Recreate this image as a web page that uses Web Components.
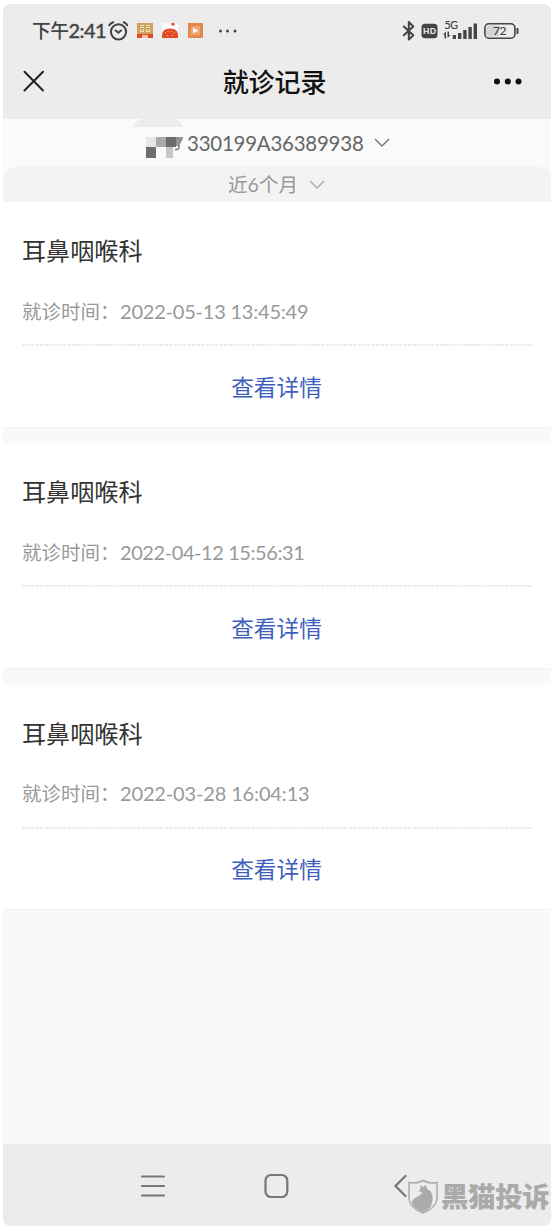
<!DOCTYPE html>
<html lang="zh-CN">
<head>
<meta charset="utf-8">
<title>就诊记录</title>
<style>
html,body{margin:0;background:#fff}
body{width:556px;height:1228px;overflow:hidden;font-family:Lato,"Noto Sans CJK SC",sans-serif}
</style>
</head>
<body>
<visit-app></visit-app>
<script>
const define = (name, html) => customElements.define(name, class extends HTMLElement {
  constructor() {
    super();
    const t = document.createElement('template');
    t.innerHTML = html;
    this.attachShadow({mode: 'open'}).append(t.content.cloneNode(true));
  }
});

define('status-bar', `
<style>
:host{display:flex;height:54px;box-sizing:border-box;padding:0 32px 0 29px;align-items:center;color:#444}
svg{display:block;flex:none}
.time{font:500 18.800px/30px Lato,"Noto Sans CJK SC",sans-serif;width:76px;white-space:nowrap;letter-spacing:-.5px;position:relative;top:-1px}
.time b{font:500 20px/30px Lato,sans-serif;letter-spacing:-.6px;-webkit-text-stroke:.3px #444}
.space{flex:1}
</style>
<span class="time">下午<b>2:41</b></span>
<svg width="20" height="20" viewBox="0 0 20 20" fill="none" stroke="#444" stroke-width="2" stroke-linecap="round"><circle cx="10.500" cy="10.800" r="7.600"/><path d="M1.300 4.300Q2.600 2 5.300 1.200M15.700 1.200Q18.200 2 19.300 4.300M7.600 9.500l2.700 2.300 2.700-2.300"/></svg>
<svg style="margin-left:9px" width="16" height="16" viewBox="0 0 16 16"><path fill="#cda35e" d="M0 0h16v12H0z"/><path fill="#f3e2b4" d="M3 2h4v1H3zM9 2h4v1H9zM3 4h4v1H3zM9 4h4v1H9zM3 6h1v3H3zM6 6h1v3H6zM9 6h1v3H9zM12 6h1v3h-1zM4 8h2v1H4zM10 8h2v1h-2z"/><path fill="#df4c2b" d="M0 11h16v4H0z"/><path fill="#f2c59d" d="M5 12h6v3H5z"/></svg>
<svg style="margin-left:9px" width="16" height="16" viewBox="0 0 16 16"><path fill="#fafafa" d="M0 0h16v15H0z"/><path fill="#e24a26" d="M0 15V12Q0 5.500 8 5.500q8 0 8 6.500v3zM9.500 0h3v2.500h-3z"/><path stroke="#f8c5a4" stroke-width="1.100" d="M3 10h1M5.500 8.500h1M9 8.500h1M12 10h1M5 12.500h1M10 12.500h1"/></svg>
<svg style="margin-left:10px" width="15" height="16" viewBox="0 0 15 16"><path fill="#e38a4b" d="M0 0h15v15H0z"/><path fill="#eda571" d="M3 3h9v9H3z"/><path fill="#fff" d="M5 4.800L10.500 7.500 5 10.200z"/></svg>
<svg style="margin-left:15px" width="20" height="8" viewBox="0 0 20 8" fill="#444"><circle cx="2.500" cy="4" r="1.500"/><circle cx="9.500" cy="4" r="1.500"/><circle cx="17" cy="4" r="1.500"/></svg>
<span class="space"></span>
<svg width="117" height="24" viewBox="0 0 117 24"><g fill="none" stroke="#444" stroke-width="2" stroke-linejoin="round" stroke-linecap="round"><path d="M1.800 7.500L11.300 16.300 6.800 20.500V3L11.300 7.500 1.800 16.300"/></g><rect x="19.500" y="4.800" width="16" height="14.500" rx="3.500" fill="#444"/><text x="21" y="15" font-family="Lato,sans-serif" font-size="8.200" font-weight="900" fill="#ececec" textLength="13">HD</text><text x="42.500" y="10" font-family="Lato,sans-serif" font-size="10.500" fill="#444" stroke="#444" stroke-width=".2" textLength="13.500">5G</text><path fill="#444" d="M41 15.500l3-3v7h-1.500v-4zM45.500 12.500H47V16h1.500l-3 3zM50.700 16h3.300v4h-3.300zM56 14h3.400v6H56zM61.200 11h3.400v9h-3.400zM66.400 8h3.400v12h-3.400zM71.600 4.500H75V20h-3.400z"/><rect x="82.900" y="4.800" width="30" height="14.400" rx="4" fill="#ededed" stroke="#444" stroke-width="1.600"/><path fill="#ccc" d="M86 6.500h11v11H86q-2 0-2-2v-7q0-2 2-2z" opacity=".75"/><path fill="#444" d="M114.500 9h1q1 0 1 1v4q0 1-1 1h-1z"/><text x="91" y="16.300" font-family="Lato,sans-serif" font-size="12" fill="#444" stroke="#444" stroke-width=".15" textLength="13.500">72</text></svg>`);

define('title-bar', `
<style>
:host{display:grid;grid-template-columns:80px 1fr 80px;height:61px;box-sizing:border-box;padding-bottom:15px;align-items:center;color:#111}
.t{text-align:center;font:500 26px/40px "Noto Sans CJK SC",sans-serif;letter-spacing:-.1px;padding:0 5px 1px 0}
.x{margin-left:20px}.m{margin-left:22px}
svg{display:block}
</style>
<svg class="x" width="22" height="22" viewBox="0 0 22 22" stroke="#222" stroke-width="2" stroke-linecap="round"><path d="M1.500 1.800L20 20.500M20 1.800L1.500 20.500"/></svg>
<div class="t"><slot></slot></div>
<svg class="m" width="30" height="8" viewBox="0 0 30 8" fill="#111"><circle cx="4" cy="4.500" r="3"/><circle cx="14.800" cy="4.500" r="3"/><circle cx="25.500" cy="4.500" r="3"/></svg>`);

define('patient-picker', `
<style>
:host{display:flex;height:48px;background:#fafafa;align-items:center;padding-left:142px;position:relative;color:#666}
.lump{position:absolute;left:130px;top:-2px;width:50px;height:10px;background:#ececec;border-radius:22px 22px 0 0/10px 10px 0 0}
.mosaic{margin-top:9px}
.id{font:20.400px/30px Lato,sans-serif;margin-left:4px;width:177px;white-space:nowrap;letter-spacing:-.19px}
svg{display:block;flex:none}.a{margin-left:10px}
</style>
<span class="lump"></span>
<svg class="mosaic" width="38" height="22" viewBox="0 0 38 22"><path fill="#e6e6e4" d="M1 0h10v10H1z"/><path fill="#aaaaa8" d="M11 0h10v10H11z"/><path fill="#6d6d6b" d="M21 0h10v10H21zM1 10h10v11H1z"/><path fill="#929290" d="M31 0h8l-5 9h-3z"/><path fill="#c7c7c5" d="M21 10h7v11h-7z"/><path fill="none" stroke="#777" stroke-width="1.500" d="M34 8v2q0 3-4 2.500"/></svg>
<span class="id"><slot></slot></span>
<svg class="a" width="16" height="10" viewBox="0 0 16 10" fill="none" stroke="#777" stroke-width="1.500"><path d="M1 1l7 7 7-7"/></svg>`);

define('period-picker', `
<style>
:host{display:flex;height:35px;background:#f3f3f3;align-items:center;padding-left:225px;color:#999;border-radius:12px 12px 0 0}
span{font:19.500px/30px Lato,"Noto Sans CJK SC",sans-serif;width:71px;white-space:nowrap;letter-spacing:.1px}
svg{display:block;margin-left:10px}
</style>
<span><slot></slot></span>
<svg width="16" height="10" viewBox="0 0 16 10" fill="none" stroke="#aaa" stroke-width="1.400"><path d="M1 1l7 7 7-7"/></svg>`);

define('visit-card', `
<style>
:host{display:block;height:225.800px;box-sizing:border-box;background:#fff;padding:0 18px 0 19px;border-bottom:1px solid #f2f2f2}
.dept{padding-top:30px;font:24.100px/36px "Noto Sans CJK SC",sans-serif;color:#333}
.time{margin-top:27.500px;display:flex;font:19.500px/30px "Noto Sans CJK SC",sans-serif;color:#999;white-space:nowrap}
.label{width:98px}
.date{font-family:Lato,sans-serif;font-size:20px;letter-spacing:var(--track,0)}
.rule{height:2px;margin-top:18.500px;background:repeating-linear-gradient(90deg,#ececec 0 3px,#f8f8f8 3px 4.600px)}
.more{margin-top:23.500px;padding-right:2px;text-align:center;font:22.700px/34px "Noto Sans CJK SC",sans-serif;color:#405fbe}
</style>
<div class="dept"><slot name="dept"></slot></div>
<div class="time"><span class="label">就诊时间：</span><span class="date"><slot name="date"></slot></span></div>
<div class="rule"></div>
<div class="more">查看详情</div>`);

define('nav-bar', `
<style>
:host{display:flex;height:82px;box-sizing:border-box;background:#ececec;border-top:1px solid #e7e7e7;align-items:center;padding-left:137px;position:relative}
svg{display:block;flex:none}
.brand{position:absolute;left:404px;top:34px;display:flex;align-items:center;color:#aaa}
.brand span{font:900 27.500px/32px "Noto Sans CJK SC",sans-serif;margin:-4px 0 0 2px;letter-spacing:-.4px;white-space:nowrap}
</style>
<svg width="26" height="24" viewBox="0 0 26 24" stroke="#777" stroke-width="2.200" stroke-linecap="round"><path d="M2 2.500h22M2 12h22M2 21.500h22"/></svg>
<svg style="margin-left:98px" width="26" height="26" viewBox="0 0 26 26" fill="none" stroke="#777" stroke-width="2.200"><rect x="1.500" y="2" width="21.800" height="22" rx="5.500"/></svg>
<svg style="margin-left:102px" width="16" height="24" viewBox="0 0 16 24" fill="none" stroke="#777" stroke-width="2.200" stroke-linecap="round"><path d="M13.500 2L3.500 12l10 10"/></svg>
<div class="brand"><svg width="32" height="36" viewBox="0 0 32 36"><path fill="#ececec" stroke="#aaa" stroke-width="1.500" d="M2 3.500Q10 5 16 1.500 22 5 30 3.500V20Q29 29 16 34 3 29 2 20z"/><path fill="#aaa" d="M4.500 23.500Q6 19 12 17l3.500-3.500-4-1.300 2-2.200V6l2.500 2 3-2 .8 3.500Q27 13.500 25.500 21L24 27.500Q21 31.500 16 33 7 30 4.500 23.500z"/></svg><span>黑猫投诉</span></div>`);

define('visit-app', `
<style>
:host{display:flex;flex-direction:column;box-sizing:border-box;width:548px;height:1222px;margin:4px 0 0 3px;border-radius:7px;overflow:hidden;background:#f9f9f9}
header{background:#ececec}
.list{display:flex;flex-direction:column;gap:15.500px;flex:1}
</style>
<header><status-bar></status-bar><title-bar>就诊记录</title-bar></header>
<patient-picker>330199A36389938</patient-picker>
<period-picker>近6个月</period-picker>
<div class="list">
<visit-card style="--track:-.21px"><span slot="dept">耳鼻咽喉科</span><span slot="date">2022-05-13 13:45:49</span></visit-card>
<visit-card style="--track:-.42px"><span slot="dept">耳鼻咽喉科</span><span slot="date">2022-04-12 15:56:31</span></visit-card>
<visit-card style="--track:-.15px"><span slot="dept">耳鼻咽喉科</span><span slot="date">2022-03-28 16:04:13</span></visit-card>
</div>
<nav-bar></nav-bar>`);
</script>
</body>
</html>
